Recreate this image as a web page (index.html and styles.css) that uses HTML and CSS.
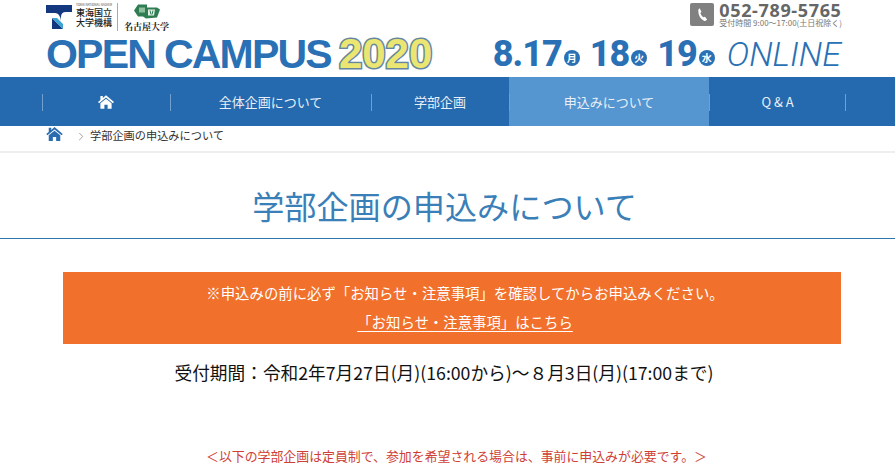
FILE: index.html
```html
<!DOCTYPE html>
<html lang="ja">
<head>
<meta charset="utf-8">
<title>学部企画の申込みについて</title>
<link rel="stylesheet" href="styles.css">
</head>
<body>
<header class="header">
  <div class="brand">
    <div class="logos">
      <svg class="t-mark" viewBox="0 0 26 24" aria-hidden="true"><path d="M0 0H26V7H20Q15 7 15 12V16Q14 8 9 8H0Z" fill="#14387f"/><path d="M6 13L17 24H6Z" fill="#14387f"/><path d="M6 13H11L17 19V24Z" fill="#3aa5d2"/></svg>
      <div class="tokai"><span class="tokai-en">TOKAI NATIONAL HIGHER</span><span>東海国立</span><span>大学機構</span></div>
      <div class="logo-rule"></div>
      <div class="nagoya">
        <svg class="nu-mark" viewBox="0 0 28 16" aria-hidden="true"><path d="M1 7L5 1H14V4H24L27 6L24 14L13 15L10 13H5L3 10Z" fill="#2f7d52"/><path d="M6 4H12V9H6Z" fill="#8fbf9c"/><path d="M15 6H22L21 12H15Z" fill="#e4f0e6"/><path d="M17 7L18 11M20 7L19 11" stroke="#2f7d52" stroke-width="1" fill="none"/></svg>
        <span>名古屋大学</span>
      </div>
    </div>
    <div class="title-line"><span class="open">OPEN</span><span class="campus">CAMPUS</span><span class="year">2020</span></div>
  </div>
  <div class="event">
    <div class="contact">
      <div class="phone-icon"><svg viewBox="0 0 24 24" aria-hidden="true"><path d="M8 3L10.5 8L9 10Q9.5 13.5 13 16L15.5 15L18.5 19Q17 21.5 14.5 21Q6 17 6 6Q6 4 8 3Z" fill="#fff"/></svg></div>
      <div class="phone-text"><strong>052-789-5765</strong><small>受付時間 9:00～17:00(土日祝除く)</small></div>
    </div>
    <div class="dates">
      <span class="date">8.17</span><span class="dot">月</span>
      <span class="date gap">18</span><span class="dot">火</span>
      <span class="date gap">19</span><span class="dot">水</span>
      <span class="online">ONLINE</span>
    </div>
  </div>
</header>
<nav class="nav">
  <a class="nav-item w-home" href="#"><svg class="home" viewBox="0 0 20 17" aria-hidden="true"><path d="M10 0L20 8.6L18.6 10L10 3L1.400 10L0 8.600L3 6V1H6V3.500ZM10 4.500L17 10V17H12V12H8V17H3V10Z" fill="#fff"/></svg></a>
  <a class="nav-item w-all" href="#">全体企画について</a>
  <a class="nav-item w-dept" href="#">学部企画</a>
  <a class="nav-item w-apply active" href="#">申込みについて</a>
  <a class="nav-item w-qa" href="#">Q &amp; A</a>
</nav>
<div class="crumbs">
  <svg class="crumb-home" viewBox="0 0 20 17" aria-hidden="true"><path d="M10 0L20 8.6L18.6 10L10 3L1.400 10L0 8.600L3 6V1H6V3.500ZM10 4.500L17 10V17H12V12H8V17H3V10Z" fill="#2a6cb0"/></svg>
  <svg class="chev" viewBox="0 0 6 10" aria-hidden="true"><path d="M1 1L5 5L1 9" fill="none" stroke="#999" stroke-width="1"/></svg>
  <span>学部企画の申込みについて</span>
</div>
<main>
  <h1 class="page-title">学部企画の申込みについて</h1>
  <section class="notice">
    <p>※申込みの前に必ず「お知らせ・注意事項」を確認してからお申込みください。</p>
    <p><a href="#">「お知らせ・注意事項」はこちら</a></p>
  </section>
  <p class="period">受付期間：令和2年7月27日(月)(16:00から)～８月3日(月)(17:00まで)</p>
  <p class="caution">＜以下の学部企画は定員制で、参加を希望される場合は、事前に申込みが必要です。＞</p>
</main>
</body>
</html>
```
FILE: styles.css
```css
* { box-sizing: border-box; }
html, body { margin: 0; padding: 0; }
body {
  width: 895px;
  height: 475px;
  overflow: hidden;
  background: #fff;
  color: #222;
  font-family: "Noto Sans CJK JP", "Noto Sans", sans-serif;
}
a { color: inherit; text-decoration: none; }
p, h1 { margin: 0; }

.header {
  height: 77px;
  display: flex;
  justify-content: space-between;
  padding: 0 53px 0 46px;
}
.brand { display: flex; flex-direction: column; }
.logos { height: 35px; display: flex; align-items: flex-start; padding-top: 3px; }
.t-mark { width: 26px; height: 24px; margin-top: 2px; }
.tokai {
  display: flex; flex-direction: column;
  margin-left: 4px;
  font-size: 9px; line-height: 10px; font-weight: 500; color: #222;
}
.tokai-en { font-size: 3px; line-height: 5px; color: #666; white-space: nowrap; }
.logo-rule { width: 1px; height: 28px; background: #aaa; margin: 0 6px 0 5px; }
.nagoya { display: flex; flex-direction: column; align-items: center; }
.nagoya span { font-family: "Noto Serif CJK JP", "Noto Sans CJK JP", serif; font-size: 9px; line-height: 10px; font-weight: 700; color: #222; margin-top: 2px; }
.nu-mark { width: 28px; height: 17px; }

.title-line {
  display: flex; align-items: center;
  height: 38px;
  font-family: "Liberation Sans", sans-serif;
  font-weight: 700;
  font-size: 41px;
  line-height: 38px;
  letter-spacing: -1.8px;
  color: #2a70b4;
}
.campus { margin-left: 9px; }
.year {
  margin-left: 8px;
  font-size: 42px;
  letter-spacing: 0;
  color: #ebe672;
  -webkit-text-stroke: 3px #66879f;
  paint-order: stroke fill;
}

.event { display: flex; flex-direction: column; align-items: flex-end; }
.contact { display: flex; height: 35px; padding-top: 3px; gap: 5px; }
.phone-icon {
  width: 24px; height: 23px; border-radius: 2px; background: #808080;
  display: flex; align-items: center; justify-content: center;
}
.phone-icon svg { width: 17px; height: 17px; }
.phone-text { display: flex; flex-direction: column; color: #666; }
.phone-text strong { font-family: "Noto Sans", sans-serif; font-size: 18px; line-height: 15px; font-weight: 700; letter-spacing: .65px; }
.phone-text small { font-size: 8px; line-height: 10px; white-space: nowrap; color: #777; }

.dates {
  display: flex; align-items: center; height: 38px;
  margin-right: 1px;
  font-family: "Roboto", sans-serif;
  color: #2a70b4;
}
.date { font-size: 36px; line-height: 38px; font-weight: 800; letter-spacing: -1px; }
.date.gap { margin-left: 10px; }
.dot {
  width: 16px; height: 16px; border-radius: 50%;
  background: #2a70b4; color: #fff;
  font: 700 10px/16px "Noto Sans CJK JP", sans-serif;
  text-align: center; margin: 8px 0 0 2px;
}
.online { margin-left: 12px; font-size: 34px; font-style: italic; font-weight: 300; }

.nav {
  height: 49px;
  display: flex;
  padding-left: 42px;
  background: #2569ae;
  color: #e8f0f7;
  font-size: 13px;
}
.nav-item {
  position: relative;
  display: flex; align-items: center; justify-content: center;
  height: 100%;
}
.nav-item::before, .nav-item::after {
  content: ""; position: absolute; top: 17px; width: 1px; height: 17px; background: #6fa0cf;
}
.nav-item::before { left: 0; }
.nav-item::after { right: 0; display: none; }
.w-qa::after { display: block; }
.w-home { width: 128px; }
.w-all { width: 201px; }
.w-dept { width: 138px; }
.w-apply { width: 200px; }
.w-qa { width: 137px; }
.active { background: #5595d0; }
.home { width: 16px; height: 14px; }

.crumbs {
  height: 27px;
  display: flex; align-items: flex-start;
  padding-left: 46px;
  border-bottom: 2px solid #eee;
  font-size: 11.200px; line-height: 18px; color: #333;
}
.crumb-home { width: 17px; height: 14px; margin-top: 1px; }
.chev { width: 6px; height: 9px; margin: 6px 0 0 15px; }
.crumbs span { margin-left: 6px; }

.page-title {
  height: 86px;
  padding: 28px 6px 0 0;
  border-bottom: 1px solid #2e75ae;
  text-align: center;
  font-size: 32.150px; line-height: 48px; font-weight: 400; color: #3a7fb8;
}
.notice {
  margin: 33px 54px 0 63px;
  height: 72px;
  background: #f1712c;
  color: #fff;
  text-align: center;
  padding: 10px 0 0 26px;
  font-size: 14.400px;
  line-height: 22px;
}
.notice p + p { margin-top: 7px; }
.notice a { text-decoration: underline; text-underline-offset: 3px; }
.period {
  margin-top: 14px;
  padding-right: 7px;
  text-align: center;
  font-size: 17.700px; line-height: 28px; color: #111;
}
.caution {
  margin-top: 60px;
  padding-left: 18px;
  text-align: center;
  font-size: 12.900px; line-height: 20px; color: #cf3f36;
}
```
